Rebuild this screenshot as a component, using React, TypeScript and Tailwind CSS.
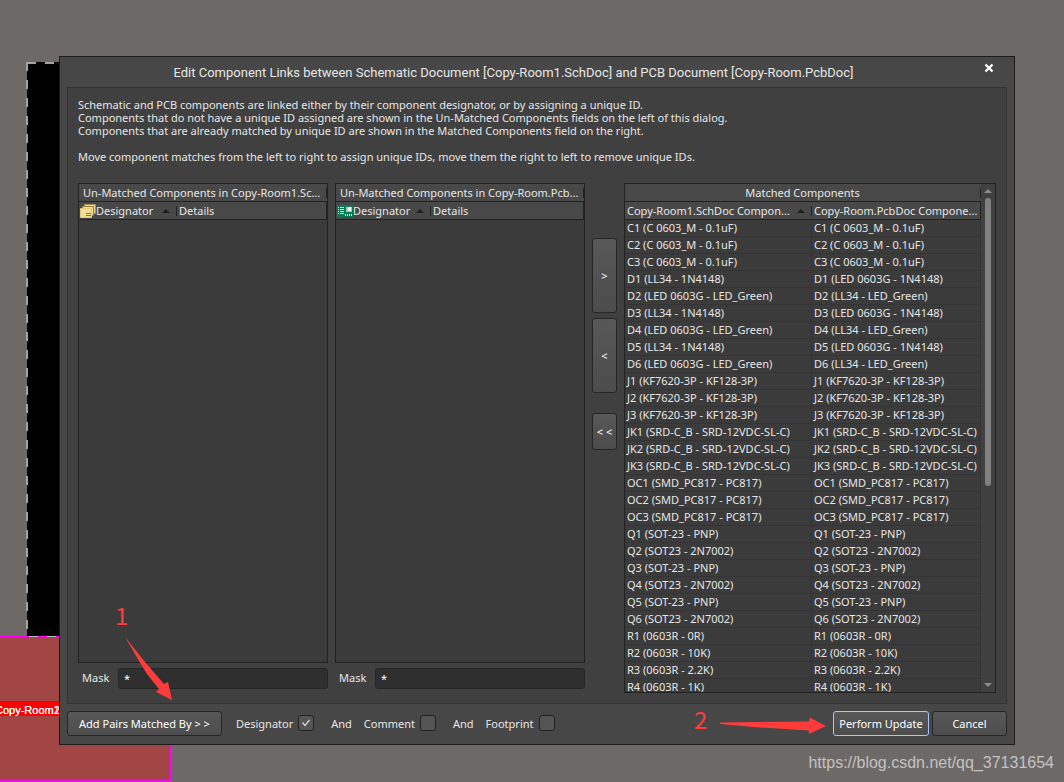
import type { ReactNode } from "react";

const matched: [string, string][] = [
	["C1 (C 0603_M - 0.1uF)", "C1 (C 0603_M - 0.1uF)"],
	["C2 (C 0603_M - 0.1uF)", "C2 (C 0603_M - 0.1uF)"],
	["C3 (C 0603_M - 0.1uF)", "C3 (C 0603_M - 0.1uF)"],
	["D1 (LL34 - 1N4148)", "D1 (LED 0603G - 1N4148)"],
	["D2 (LED 0603G - LED_Green)", "D2 (LL34 - LED_Green)"],
	["D3 (LL34 - 1N4148)", "D3 (LED 0603G - 1N4148)"],
	["D4 (LED 0603G - LED_Green)", "D4 (LL34 - LED_Green)"],
	["D5 (LL34 - 1N4148)", "D5 (LED 0603G - 1N4148)"],
	["D6 (LED 0603G - LED_Green)", "D6 (LL34 - LED_Green)"],
	["J1 (KF7620-3P - KF128-3P)", "J1 (KF7620-3P - KF128-3P)"],
	["J2 (KF7620-3P - KF128-3P)", "J2 (KF7620-3P - KF128-3P)"],
	["J3 (KF7620-3P - KF128-3P)", "J3 (KF7620-3P - KF128-3P)"],
	["JK1 (SRD-C_B - SRD-12VDC-SL-C)", "JK1 (SRD-C_B - SRD-12VDC-SL-C)"],
	["JK2 (SRD-C_B - SRD-12VDC-SL-C)", "JK2 (SRD-C_B - SRD-12VDC-SL-C)"],
	["JK3 (SRD-C_B - SRD-12VDC-SL-C)", "JK3 (SRD-C_B - SRD-12VDC-SL-C)"],
	["OC1 (SMD_PC817 - PC817)", "OC1 (SMD_PC817 - PC817)"],
	["OC2 (SMD_PC817 - PC817)", "OC2 (SMD_PC817 - PC817)"],
	["OC3 (SMD_PC817 - PC817)", "OC3 (SMD_PC817 - PC817)"],
	["Q1 (SOT-23 - PNP)", "Q1 (SOT-23 - PNP)"],
	["Q2 (SOT23 - 2N7002)", "Q2 (SOT23 - 2N7002)"],
	["Q3 (SOT-23 - PNP)", "Q3 (SOT-23 - PNP)"],
	["Q4 (SOT23 - 2N7002)", "Q4 (SOT23 - 2N7002)"],
	["Q5 (SOT-23 - PNP)", "Q5 (SOT-23 - PNP)"],
	["Q6 (SOT23 - 2N7002)", "Q6 (SOT23 - 2N7002)"],
	["R1 (0603R - 0R)", "R1 (0603R - 0R)"],
	["R2 (0603R - 10K)", "R2 (0603R - 10K)"],
	["R3 (0603R - 2.2K)", "R3 (0603R - 2.2K)"],
	["R4 (0603R - 1K)", "R4 (0603R - 1K)"],
];

const buttonLook =
	"rounded-[3px] border border-[#262626] bg-linear-to-b from-[#585858] to-[#4c4c4c] text-white";

function SortMark() {
	return (
		<svg width="8" height="4" viewBox="0 0 8 4" className="shrink-0" aria-hidden="true">
			<path d="M0 4 L4 0 L8 4 Z" fill="#1f1f1f" />
		</svg>
	);
}

function SheetsIcon() {
	return (
		<svg width="16" height="14" viewBox="0 0 16 14" className="shrink-0" aria-hidden="true">
			<path d="M4.5 0.5h11v9h-11z" fill="#ecd78c" stroke="#a8924f" />
			<path d="M2.5 2.5h11v9h-11z" fill="#f0dc96" stroke="#96803f" />
			<path d="M0.5 4.5h11v9h-11z" fill="#f3de97" stroke="#e2c878" />
			<path d="M6 9.5h5M6 11.5h5" stroke="#8a7435" fill="none" />
		</svg>
	);
}

function BoardIcon() {
	return (
		<svg width="16" height="12" viewBox="0 0 16 12" className="shrink-0" aria-hidden="true">
			<rect width="16" height="12" fill="#0b7a56" />
			<path d="M1 2.5h1M1 4.5h1M1 6.5h1M1 8.5h1M3 2.5h4M3 4.5h4M3 6.5h4M3 8.5h4" stroke="#c9e6d9" />
			<rect x="9" y="2" width="6" height="5" fill="#9fc9b8" />
			<rect x="11" y="2" width="3" height="4" fill="#f2faf6" />
			<path d="M8.5 9v2M10.5 9v2M12.5 9v2M14.5 9v2" stroke="#d9efe4" />
		</svg>
	);
}

function UnmatchedList({ title, icon, designatorCol }: { title: string; icon: ReactNode; designatorCol: string }) {
	return (
		<table className="block h-[480px] w-full border border-[#222] bg-[#3b3b3b]">
			<thead className="block font-normal">
				<tr className="flex h-[18px] items-center justify-between border-b border-[#222] bg-[#484848] pl-1">
					<th className="font-normal whitespace-nowrap">{title}</th>
					<th className="h-2.5 w-px bg-[#222] p-0" aria-hidden="true" />
				</tr>
				<tr className="flex h-[18px] items-center border-r border-b border-[#222] bg-[#484848] pl-px">
					<th className={`flex items-center font-normal ${designatorCol}`}>
						{icon}
						<span className="flex-1 text-left">Designator</span>
						<SortMark />
					</th>
					<th className="ml-1.5 border-l border-[#222] pl-0.5 leading-[10px] font-normal">Details</th>
				</tr>
			</thead>
		</table>
	);
}

function Mask({ id }: { id: string }) {
	return (
		<div className="mt-[5px] flex items-center">
			<label htmlFor={id} className="w-10 pb-0.5 pl-1">Mask</label>
			<input
				id={id}
				defaultValue="*"
				className="h-[21px] min-w-0 flex-1 rounded-[3px] border border-[#262626] bg-[#2f2f2f] px-[5px] text-white outline-none"
			/>
		</div>
	);
}

function Check({ id, label, checked = false }: { id: string; label: string; checked?: boolean }) {
	return (
		<div className="flex items-center gap-[5px]">
			<label htmlFor={id}>{label}</label>
			<span className="grid size-4">
				<input
					id={id}
					type="checkbox"
					defaultChecked={checked}
					className="peer col-start-1 row-start-1 size-4 appearance-none rounded-[3px] border border-[#222] bg-[#555]"
				/>
				<svg
					viewBox="0 0 16 16"
					className="pointer-events-none invisible col-start-1 row-start-1 size-4 peer-checked:visible"
					aria-hidden="true"
				>
					<path d="M4.5 7.5 L7 10.5 L11.5 5" fill="none" stroke="#d8d8d8" strokeWidth="1.2" />
				</svg>
			</span>
		</div>
	);
}

function MatchedList() {
	return (
		<div className="flex h-[510px] border border-[#222] bg-[#3b3b3b]">
			<div className="flex min-w-0 flex-1 flex-col">
				<div className="flex h-[18px] shrink-0 items-center border-b border-[#222] bg-[#484848]">
					<h2 className="flex-1 text-center">Matched Components</h2>
					<span className="h-2.5 w-px bg-[#222]" />
				</div>
				<div className="min-h-0 flex-1 overflow-y-auto [scrollbar-width:none]">
					<table className="w-full table-fixed border-separate border-spacing-0 whitespace-nowrap">
						<thead>
							<tr className="h-[18px] bg-[#484848] text-left">
								<th className="w-[187px] border-b border-[#222] p-0 pl-0.5 font-normal">
									<div className="flex items-center">
										<span className="flex-1">Copy-Room1.SchDoc Compon...</span>
										<SortMark />
										<span className="ml-1.5 h-2.5 w-px bg-[#222]" />
									</div>
								</th>
								<th className="border-r border-b border-[#222] p-0 pl-0.5 font-normal">Copy-Room.PcbDoc Compone...</th>
							</tr>
						</thead>
						<tbody>
							{matched.map(([sch, pcb]) => (
								<tr key={sch} className="h-[17px] align-top">
									<td className="border-r border-b border-[#343434] p-0 pt-px pl-0.5">{sch}</td>
									<td className="border-r border-b border-[#343434] p-0 pt-px pl-0.5">{pcb}</td>
								</tr>
							))}
						</tbody>
					</table>
				</div>
			</div>
			<div className="flex w-3.5 flex-col items-center bg-[#404040] py-[5px]" aria-hidden="true">
				<svg width="8" height="4" viewBox="0 0 8 4"><path d="M0 4 L4 0 L8 4 Z" fill="#8a8a8a" /></svg>
				<div className="mt-[5px] h-72 w-1.5 rounded-full bg-[#808080]" />
				<svg width="8" height="4" viewBox="0 0 8 4" className="mt-auto"><path d="M0 0 L4 4 L8 0 Z" fill="#8a8a8a" /></svg>
			</div>
		</div>
	);
}

// Board area behind the dialog
function Canvas() {
	return (
		<svg className="absolute top-0 left-0" width="180" height="782" aria-hidden="true">
			<rect x="27" y="62" width="60" height="575" fill="#000" />
			<path d="M27 62V636" stroke="#a5a3a1" strokeWidth="2" strokeDasharray="9 9" />
			<path d="M27 63H87" stroke="#a5a3a1" strokeWidth="2" strokeDasharray="9 9" />
			<rect x="-2.5" y="636.5" width="173" height="144" fill="#a14545" stroke="#ff00ff" />
			<path d="M29 636.5H60" stroke="#bdbdbd" strokeDasharray="9 9" />
			<rect x="0" y="701" width="60" height="15" fill="#f00" />
			<g fill="#fff" fontFamily="Liberation Sans, sans-serif" fontSize="11">
				<text x="-5" y="714">Copy-Room1</text>
				<text x="-5" y="714">Copy-Room2</text>
			</g>
		</svg>
	);
}

function Notes() {
	return (
		<svg className="pointer-events-none absolute top-0 left-0" width="840" height="745" aria-hidden="true">
			<g fill="#ff3b3b">
				<path d="M125 637 L145 662 L164 684 L168 682 L172 700 L156 692 L159 689 L147 674 L139 661 Z" />
				<path d="M720 722.5 L760 722 L809 721.5 L810 717.5 L826 726 L809 734 L809 730.5 L760 727.5 L720 724 Z" />
				<g fontFamily="Noto Sans CJK SC, sans-serif" fontSize="24">
					<text x="115" y="625">1</text>
					<text x="694" y="729">2</text>
				</g>
			</g>
		</svg>
	);
}

export default function App() {
	return (
		<main className="relative min-h-screen overflow-hidden bg-[#6d6967] pt-14 pr-[49px] pl-[59px] font-['Noto_Sans',sans-serif] text-[11px] leading-[13px] text-[#e6e6e6]">
			<Canvas />
			<section
				role="dialog"
				aria-labelledby="dialog-title"
				className="relative border border-[#1c1c1c] bg-[#474747] px-[7px]"
			>
				<header className="flex h-[30px] items-center">
					<h1 id="dialog-title" className="flex-1 text-center font-[Roboto,sans-serif] text-[13px]">
						Edit Component Links between Schematic Document [Copy-Room1.SchDoc] and PCB Document [Copy-Room.PcbDoc]
					</h1>
					<button type="button" aria-label="Close" className="mr-[9px] mb-2 ml-5 p-1">
						<svg width="10" height="10" viewBox="0 0 10 10" aria-hidden="true">
							<path d="M1.5 1.5 L8.5 8.5 M8.5 1.5 L1.5 8.5" stroke="#fff" strokeWidth="2.4" />
						</svg>
					</button>
				</header>

				<div className="border border-[#333] bg-[#404040] px-2.5 pt-2.5 pb-2.5">
					<p>Schematic and PCB components are linked either by their component designator, or by assigning a unique ID.</p>
					<p>Components that do not have a unique ID assigned are shown in the Un-Matched Components fields on the left of this dialog.</p>
					<p>Components that are already matched by unique ID are shown in the Matched Components field on the right.</p>
					<p className="mt-[13px]">Move component matches from the left to right to assign unique IDs, move them the right to left to remove unique IDs.</p>

					<div className="mt-5 grid grid-cols-[250fr_250fr_25px_372fr] gap-[7px]">
						<div>
							<UnmatchedList
								title="Un-Matched Components in Copy-Room1.Sc..."
								icon={<SheetsIcon />}
								designatorCol="w-[90px]"
							/>
							<Mask id="mask-sch" />
						</div>
						<div>
							<UnmatchedList
								title="Un-Matched Components in Copy-Room.Pcb..."
								icon={<BoardIcon />}
								designatorCol="w-[87px]"
							/>
							<Mask id="mask-pcb" />
						</div>
						<div className="flex flex-col pt-[55px]">
							<button type="button" className={`h-[75px] ${buttonLook}`}>&gt;</button>
							<button type="button" className={`mt-[5px] h-[75px] ${buttonLook}`}>&lt;</button>
							<button type="button" className={`mt-5 h-[37px] ${buttonLook}`}>&lt; &lt;</button>
						</div>
						<MatchedList />
					</div>
				</div>

				<footer className="flex h-10 items-center pb-0.5">
					<button type="button" className={`h-[25px] w-[155px] ${buttonLook}`}>Add Pairs Matched By &gt; &gt;</button>
					<div className="ml-3.5 flex items-center">
						<Check id="by-designator" label="Designator" checked />
						<span className="mr-3 ml-[17px]">And</span>
						<Check id="by-comment" label="Comment" />
						<span className="mr-3 ml-[17px]">And</span>
						<Check id="by-footprint" label="Footprint" />
					</div>
					<button type="button" className="ml-auto h-[25px] w-24 rounded-[3px] border border-[#a3c8f5] bg-linear-to-b from-[#585858] to-[#4c4c4c] text-white">
						Perform Update
					</button>
					<button type="button" className={`ml-[3px] h-[25px] w-[75px] ${buttonLook}`}>Cancel</button>
				</footer>
			</section>
			<Notes />
			<p className="relative -mr-[39px] pt-2 text-right font-['Liberation_Sans',sans-serif] text-base leading-5 text-[#c4c2c1]">
				https://blog.csdn.net/qq_37131654
			</p>
		</main>
	);
}
